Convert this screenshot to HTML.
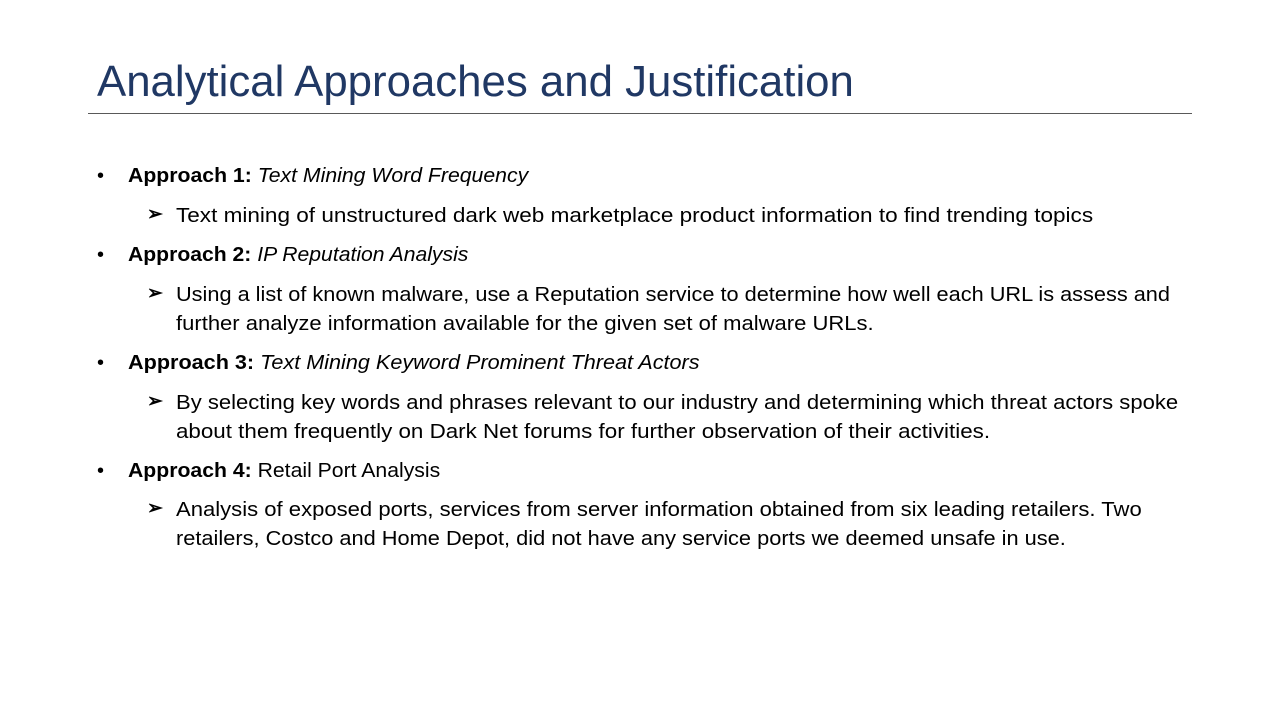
<!DOCTYPE html>
<html><head><meta charset="utf-8"><style>
body{margin:0;width:1280px;height:720px;background:#fff;overflow:hidden;position:relative;font-family:"Liberation Sans",sans-serif;color:#000}
.t{position:absolute;left:97px;top:55px;font-size:44px;line-height:54px;color:#203864;white-space:nowrap;transform:scaleX(0.995);transform-origin:left center}
.rule{position:absolute;left:88px;top:113px;width:1104px;height:1px;background:#595959}
.l{position:absolute;font-size:20px;line-height:24px;white-space:nowrap;transform-origin:left center}
.b{position:absolute;left:97px;font-size:20px;line-height:24px}
.a{position:absolute;left:147px;font-size:19px;line-height:24px;font-weight:bold}
</style></head><body>
<div class="t">Analytical Approaches and Justification</div>
<div class="rule"></div>

<div class="b" style="top:164px">•</div>
<div class="l" style="left:128px;top:164px;transform:scaleX(1.061)"><b>Approach 1:</b> <i>Text Mining Word Frequency</i></div>
<div class="a" style="top:203px">➢</div>
<div class="l" style="left:176px;top:204px;transform:scaleX(1.127)">Text mining of unstructured dark web marketplace product information to find trending topics</div>

<div class="b" style="top:243px">•</div>
<div class="l" style="left:128px;top:243px;transform:scaleX(1.057)"><b>Approach 2:</b> <i>IP Reputation Analysis</i></div>
<div class="a" style="top:282px">➢</div>
<div class="l" style="left:176px;top:283px;transform:scaleX(1.086)">Using a list of known malware, use a Reputation service to determine how well each URL is assess and</div>
<div class="l" style="left:176px;top:312px;transform:scaleX(1.101)">further analyze information available for the given set of malware URLs.</div>

<div class="b" style="top:351px">•</div>
<div class="l" style="left:128px;top:351px;transform:scaleX(1.081)"><b>Approach 3:</b> <i>Text Mining Keyword Prominent Threat Actors</i></div>
<div class="a" style="top:390px">➢</div>
<div class="l" style="left:176px;top:391px;transform:scaleX(1.102)">By selecting key words and phrases relevant to our industry and determining which threat actors spoke</div>
<div class="l" style="left:176px;top:420px;transform:scaleX(1.118)">about them frequently on Dark Net forums for further observation of their activities.</div>

<div class="b" style="top:459px">•</div>
<div class="l" style="left:128px;top:459px;transform:scaleX(1.06)"><b>Approach 4:</b> Retail Port Analysis</div>
<div class="a" style="top:497px">➢</div>
<div class="l" style="left:176px;top:498px;transform:scaleX(1.103)">Analysis of exposed ports, services from server information obtained from six leading retailers. Two</div>
<div class="l" style="left:176px;top:527px;transform:scaleX(1.089)">retailers, Costco and Home Depot, did not have any service ports we deemed unsafe in use.</div>
</body></html>
